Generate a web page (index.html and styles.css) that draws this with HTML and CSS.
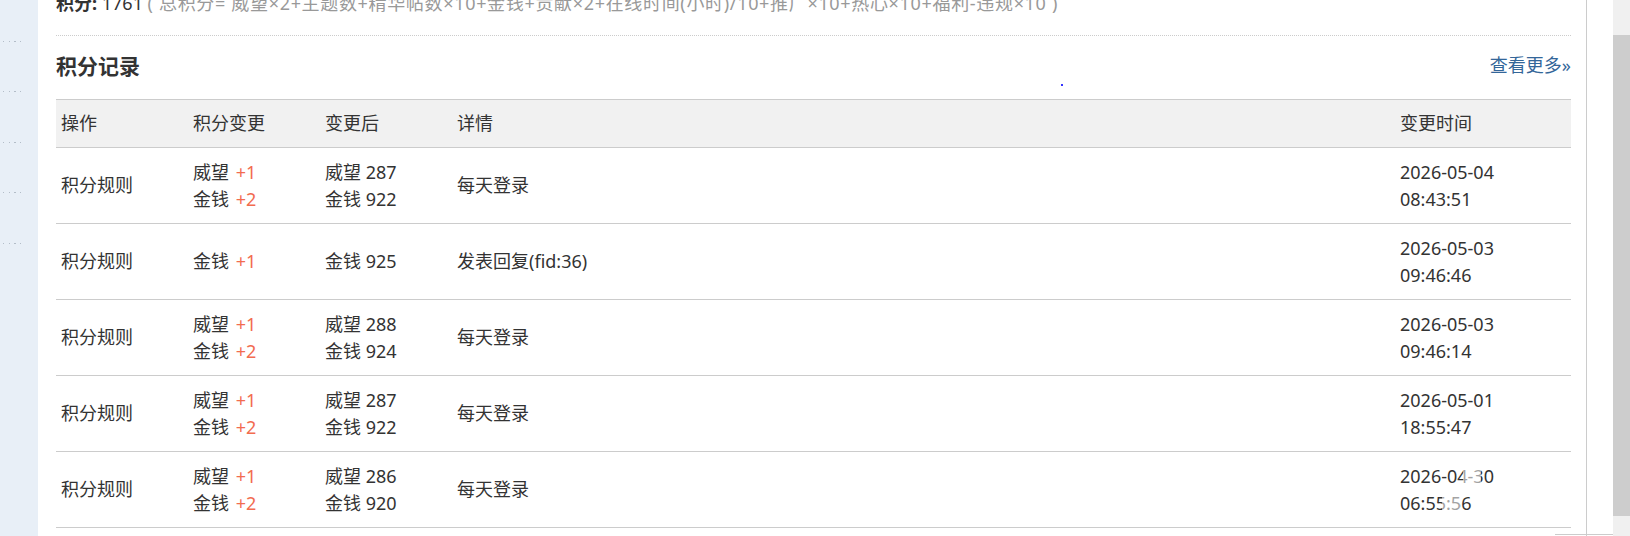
FILE: index.html
```html
<!DOCTYPE html>
<html>

<head>
	<meta charset="utf-8">
	<title>积分记录</title>
	<link rel="stylesheet" href="styles.css">
</head>

<body>
	<div class="page">

		<div class="sidebar">
			<div class="dots"></div>
			<div class="dots"></div>
			<div class="dots"></div>
			<div class="dots"></div>
			<div class="dots"></div>
		</div>

		<div class="main">
			<div class="score">
				<b>积分:</b> 1761 <span class="formula">( 总积分= 威望×2+主题数+精华帖数×10+金钱+贡献×2+在线时间(小时)/10+推广×10+热心×10+福利-违规×10 )</span>
			</div>

			<div class="title_bar">
				<h2>积分记录</h2>
				<a href="#" class="more">查看更多»</a>
			</div>

			<table class="log">
				<colgroup>
					<col class="c_op">
					<col class="c_change">
					<col class="c_after">
					<col>
					<col class="c_time">
				</colgroup>
				<tr>
					<th>操作</th>
					<th>积分变更</th>
					<th>变更后</th>
					<th>详情</th>
					<th>变更时间</th>
				</tr>
				<tr>
					<td>积分规则</td>
					<td>威望 <span class="plus">+1</span><br>金钱 <span class="plus">+2</span></td>
					<td>威望 287<br>金钱 922</td>
					<td>每天登录</td>
					<td>2026-05-04<br>08:43:51</td>
				</tr>
				<tr>
					<td>积分规则</td>
					<td>金钱 <span class="plus">+1</span></td>
					<td>金钱 925</td>
					<td>发表回复(fid:36)</td>
					<td>2026-05-03<br>09:46:46</td>
				</tr>
				<tr>
					<td>积分规则</td>
					<td>威望 <span class="plus">+1</span><br>金钱 <span class="plus">+2</span></td>
					<td>威望 288<br>金钱 924</td>
					<td>每天登录</td>
					<td>2026-05-03<br>09:46:14</td>
				</tr>
				<tr>
					<td>积分规则</td>
					<td>威望 <span class="plus">+1</span><br>金钱 <span class="plus">+2</span></td>
					<td>威望 287<br>金钱 922</td>
					<td>每天登录</td>
					<td>2026-05-01<br>18:55:47</td>
				</tr>
				<tr>
					<td>积分规则</td>
					<td>威望 <span class="plus">+1</span><br>金钱 <span class="plus">+2</span></td>
					<td>威望 286<br>金钱 920</td>
					<td>每天登录</td>
					<td>2026-04-30<br>06:55:56</td>
				</tr>
			</table>
		</div>

		<div class="gutter"></div>

		<div class="scrollbar">
			<div class="thumb"></div>
		</div>

		<!-- stray bits lying over the page -->
		<span class="blue_dot"></span>
		<span class="fade fade_top"></span>
		<span class="fade fade_low"></span>
		<span class="bottom_line"></span>
	</div>
</body>

</html>
```

FILE: styles.css
```css
html,
body {
	margin: 0;
	padding: 0;
	background: #fff;
}

body {
	width: 1630px;
	height: 536px;
	overflow: hidden;
	font-family: "Noto Sans", "Noto Sans CJK SC", sans-serif;
	font-size: 18px;
	color: #333;
}

.page {
	position: relative;
	display: flex;
	height: 536px;
}

.sidebar {
	width: 38px;
	flex: none;
	background: #e8eff7;
	margin-top: -8px;
}

.sidebar .dots {
	width: 21px;
	height: 49.5px;
	margin-left: 3px;
	border-bottom: 1px solid transparent;
	background: repeating-linear-gradient(to right, #b3bdc8 0 1.5px, transparent 1.5px 5.6px) bottom / 100% 1px no-repeat;
}

.main {
	width: 1515px;
	flex: none;
	padding: 0 15px 0 18px;
	border-right: 1px solid #ccc;
}

.score {
	margin-top: -10px;
	line-height: 27px;
	padding-bottom: 18px;
	border-bottom: 1px dotted #ccc;
	white-space: nowrap;
}

.score b {
	font-weight: bold;
}

.score .formula {
	color: #999;
	letter-spacing: 0.67px;
}

.title_bar {
	display: flex;
	justify-content: space-between;
	align-items: center;
	height: 63px;
}

.title_bar h2 {
	margin: 0;
	padding-bottom: 3px;
	font-size: 21px;
	line-height: 21px;
	font-weight: bold;
}

.title_bar .more {
	color: #369;
	text-decoration: none;
	line-height: 18px;
	padding-bottom: 6px;
}

.log {
	width: 100%;
	table-layout: fixed;
	border-collapse: collapse;
	border-top: 1px solid #ccc;
}

.log col.c_op,
.log col.c_change,
.log col.c_after {
	width: 132px;
}

.log col.c_time {
	width: 176px;
}

.log th {
	height: 47px;
	padding: 0 5px;
	background: #f1f1f1;
	font-weight: normal;
	text-align: left;
	line-height: 27px;
	border-bottom: 1px solid #ccc;
}

.log td {
	height: 55px;
	padding: 10px 5px;
	line-height: 27px;
	border-bottom: 1px solid #ccc;
	white-space: nowrap;
}

.plus {
	color: #f26c4f;
	margin-left: 2px;
}

.gutter {
	width: 26px;
	flex: none;
}

.scrollbar {
	width: 17px;
	flex: none;
	background: #f0f0f0;
	padding-top: 35px;
}

.scrollbar .thumb {
	height: 481px;
	background: #cdcdcd;
}

.blue_dot {
	position: absolute;
	left: 1061px;
	top: 84px;
	width: 2px;
	height: 2px;
	background: #33f;
}

.fade {
	position: absolute;
	width: 18px;
	height: 24px;
	background: rgba(255, 255, 255, 0.55);
}

.fade_top {
	left: 1463px;
	top: 462px;
}

.fade_low {
	left: 1442px;
	top: 489px;
}

.bottom_line {
	position: absolute;
	left: 1555px;
	top: 534px;
	width: 58px;
	height: 1px;
	background: #ccc;
}
```
